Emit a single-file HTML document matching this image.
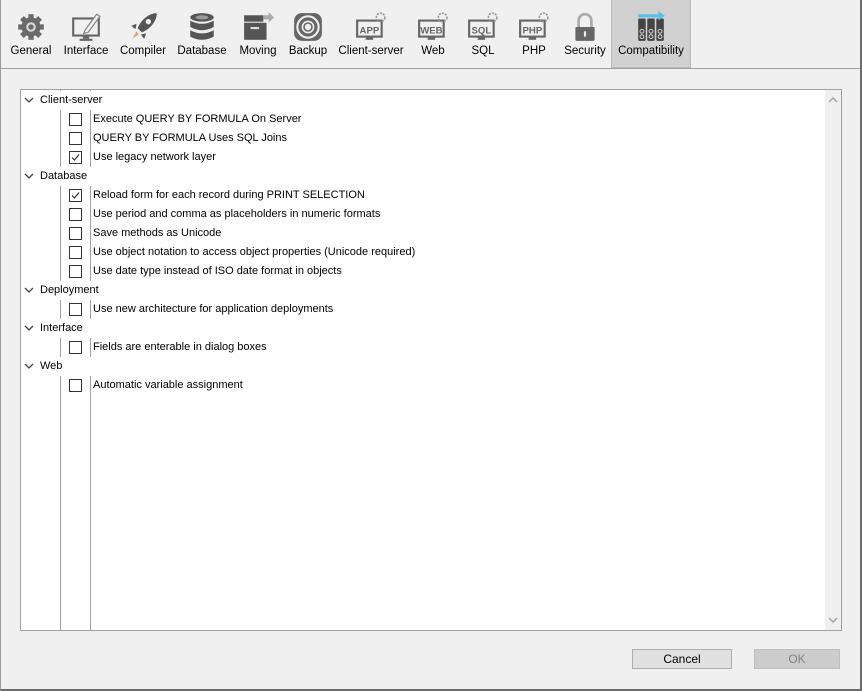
<!DOCTYPE html>
<html><head><style>
*{margin:0;padding:0;box-sizing:border-box}
body{width:862px;height:691px;background:#f0f0f0;font-family:"Liberation Sans",sans-serif;font-size:11px;color:#000;position:relative;overflow:hidden}
.frame{position:absolute;left:0;top:0;width:862px;height:691px;border-right:2px solid #6d6d6d;border-bottom:2px solid #6d6d6d;border-left:1px solid #9a9a9a}
.tb{position:absolute;top:0;left:0;width:860px;height:69px;border-bottom:1px solid #a0a0a0}
.it{position:absolute;top:0;height:68px;text-align:center}
.it .lb{position:absolute;top:44px;left:0;right:0;font-size:11.5px;line-height:14px;padding-top:0;white-space:nowrap}
.it svg{position:absolute;top:11px;left:50%;margin-left:-16px}
.sel{background:#d1d1d1;border:1px solid #b9b9b9;border-top:none}
.panel{position:absolute;left:20px;top:89px;width:822px;height:542px;background:#fff;border:1px solid #a0a0a0}
.vl{position:absolute;top:0;bottom:0;width:1px;background:#a0a0a0}
.sb{position:absolute;right:0;top:0;bottom:0;width:16px;background:#f0f0f0}
.row{position:absolute;height:19px;line-height:19px;white-space:nowrap}
.cb{position:absolute;left:48px;top:3px;width:13px;height:13px;border:1px solid #333;background:#fff}
.g{left:0;width:803px;background:#fff;padding-left:19px}
.btn{position:absolute;top:649px;height:20px;border:1px solid #adadad;background:#e1e1e1;text-align:center;line-height:18px;font-size:12px}
</style></head><body>
<div class="frame"></div>
<div class="tb">
 <div class="it" style="left:6px;width:50px"><svg width="32" height="32" viewBox="0 0 30 30"><g fill="#6a6a6a"><circle cx="15" cy="15" r="9"/><g stroke="#6a6a6a" stroke-width="5"><line x1="15" y1="3" x2="15" y2="27"/><line x1="3" y1="15" x2="27" y2="15"/><line x1="6.5" y1="6.5" x2="23.5" y2="23.5"/><line x1="23.5" y1="6.5" x2="6.5" y2="23.5"/></g></g><circle cx="15" cy="15" r="4.5" fill="#d8d8d8"/><circle cx="15" cy="15" r="2.5" fill="#6a6a6a"/></svg><div class="lb">General</div></div>
 <div class="it" style="left:60px;width:52px"><svg width="32" height="32" viewBox="0 0 30 30"><rect x="3" y="7" width="24" height="16" fill="none" stroke="#666" stroke-width="2"/><rect x="12" y="23" width="6" height="3" fill="#666"/><rect x="9" y="26" width="12" height="2" fill="#666"/><path d="M14 18 L25 3 L28 5 L17 20 L13 21Z" fill="#f0f0f0" stroke="#888" stroke-width="1.2"/></svg><div class="lb">Interface</div></div>
 <div class="it" style="left:116px;width:54px"><svg width="32" height="32" viewBox="0 0 30 30"><path d="M27 2 C19 3 13 9 10 16 L14 20 C21 17 27 11 28 3Z" fill="#555"/><circle cx="20" cy="10" r="2.5" fill="#eee"/><path d="M9 12 L4 14 L8 17Z M18 21 L16 26 L13 22Z" fill="#555"/><path d="M9 19 L5 26 L11 22Z" fill="#e8a080"/></svg><div class="lb">Compiler</div></div>
 <div class="it" style="left:174px;width:56px"><svg width="32" height="32" viewBox="0 0 30 30"><g fill="#555"><ellipse cx="15" cy="6" rx="11" ry="4"/><path d="M4 9 Q15 15 26 9 V15 Q15 21 4 15Z"/><path d="M4 18 Q15 24 26 18 V24 Q15 30 4 24Z"/></g><ellipse cx="15" cy="6" rx="6" ry="2" fill="#999"/></svg><div class="lb">Database</div></div>
 <div class="it" style="left:234px;width:48px"><svg width="32" height="32" viewBox="0 0 30 30"><rect x="2" y="4" width="18" height="6" fill="#555"/><rect x="2" y="11" width="21" height="16" fill="#555"/><rect x="8" y="15" width="8" height="2" fill="#ddd"/><path d="M20 4 H25 V1 L30 6 L25 11 V8 H20Z" fill="#aaa"/></svg><div class="lb">Moving</div></div>
 <div class="it" style="left:285px;width:46px"><svg width="32" height="32" viewBox="0 0 30 30"><rect x="2" y="2" width="26" height="26" rx="7" fill="#666"/><circle cx="15" cy="15" r="11" fill="#eee"/><circle cx="15" cy="15" r="9" fill="#666"/><circle cx="15" cy="15" r="6" fill="#eee"/><circle cx="15" cy="15" r="4.5" fill="#666"/><circle cx="15" cy="15" r="3" fill="#eee"/></svg><div class="lb">Backup</div></div>
 <div class="it" style="left:335px;width:72px"><svg width="32" height="32" viewBox="0 0 30 30"><rect x="2" y="9" width="23" height="15" fill="none" stroke="#666" stroke-width="2"/><rect x="10" y="24" width="7" height="3" fill="#666"/><text x="13.5" y="21" font-size="9" font-weight="bold" fill="#666" text-anchor="middle" font-family="Liberation Sans">APP</text><circle cx="24" cy="6" r="4" fill="none" stroke="#999" stroke-width="1.5" stroke-dasharray="2 1"/></svg><div class="lb">Client-server</div></div>
 <div class="it" style="left:412px;width:42px"><svg width="32" height="32" viewBox="0 0 30 30"><rect x="2" y="9" width="23" height="15" fill="none" stroke="#666" stroke-width="2"/><rect x="10" y="24" width="7" height="3" fill="#666"/><text x="13.5" y="21" font-size="9" font-weight="bold" fill="#666" text-anchor="middle" font-family="Liberation Sans">WEB</text><circle cx="24" cy="6" r="4" fill="none" stroke="#999" stroke-width="1.5" stroke-dasharray="2 1"/></svg><div class="lb">Web</div></div>
 <div class="it" style="left:462px;width:42px"><svg width="32" height="32" viewBox="0 0 30 30"><rect x="2" y="9" width="23" height="15" fill="none" stroke="#666" stroke-width="2"/><rect x="10" y="24" width="7" height="3" fill="#666"/><text x="13.5" y="21" font-size="9" font-weight="bold" fill="#666" text-anchor="middle" font-family="Liberation Sans">SQL</text><circle cx="24" cy="6" r="4" fill="none" stroke="#999" stroke-width="1.5" stroke-dasharray="2 1"/></svg><div class="lb">SQL</div></div>
 <div class="it" style="left:513px;width:42px"><svg width="32" height="32" viewBox="0 0 30 30"><rect x="2" y="9" width="23" height="15" fill="none" stroke="#666" stroke-width="2"/><rect x="10" y="24" width="7" height="3" fill="#666"/><text x="13.5" y="21" font-size="9" font-weight="bold" fill="#666" text-anchor="middle" font-family="Liberation Sans">PHP</text><circle cx="24" cy="6" r="4" fill="none" stroke="#999" stroke-width="1.5" stroke-dasharray="2 1"/></svg><div class="lb">PHP</div></div>
 <div class="it" style="left:561px;width:48px"><svg width="32" height="32" viewBox="0 0 30 30"><path d="M9 15 V9 A6 6 0 0 1 21 9 V15" fill="none" stroke="#aaa" stroke-width="2.5"/><rect x="6" y="15" width="18" height="13" rx="1" fill="#666"/><rect x="14" y="19" width="2" height="5" fill="#eee"/></svg><div class="lb">Security</div></div>
 <div class="it sel" style="left:611px;width:80px"><svg width="32" height="32" viewBox="0 0 30 30"><g fill="#444"><rect x="3" y="7" width="7" height="21" rx="1"/><rect x="11.5" y="7" width="7" height="21" rx="1"/><rect x="20" y="7" width="7" height="21" rx="1"/></g><g fill="none" stroke="#ccc" stroke-width="1"><circle cx="6.5" cy="19" r="1.8"/><circle cx="15" cy="19" r="1.8"/><circle cx="23.5" cy="19" r="1.8"/><circle cx="6.5" cy="24" r="1.8"/><circle cx="15" cy="24" r="1.8"/><circle cx="23.5" cy="24" r="1.8"/></g><path d="M3 3 H22 V0 L28 4.5 L22 9 V6 H3Z" fill="#5bbfee"/></svg><div class="lb">Compatibility</div></div>
</div>
<div class="panel">
 <div class="vl" style="left:39px"></div>
 <div class="vl" style="left:69px"></div>
 <div class="sb"><svg width="16" height="16" style="position:absolute;top:2px;left:0"><path d="M4 10 L8 6 L12 10" fill="none" stroke="#a0a0a0" stroke-width="1.5"/></svg><svg width="16" height="16" style="position:absolute;bottom:2px;left:0"><path d="M4 6 L8 10 L12 6" fill="none" stroke="#a0a0a0" stroke-width="1.5"/></svg></div>
 <div class="row g" style="top:1px">Client-server</div>
 <div class="row" style="top:20px;left:0;width:400px"><div class="cb"></div><span style="position:absolute;left:72px">Execute QUERY BY FORMULA On Server</span></div>
 <div class="row" style="top:39px;left:0;width:400px"><div class="cb"></div><span style="position:absolute;left:72px">QUERY BY FORMULA Uses SQL Joins</span></div>
 <div class="row" style="top:58px;left:0;width:400px"><div class="cb"><svg width="11" height="11" style="position:absolute;left:0;top:0"><path d="M2 5.5 L4.5 8 L9 2.5" fill="none" stroke="#333" stroke-width="1.2"/></svg></div><span style="position:absolute;left:72px">Use legacy network layer</span></div>
 <div class="row g" style="top:77px">Database</div>
 <div class="row" style="top:96px;left:0;width:500px"><div class="cb"><svg width="11" height="11" style="position:absolute;left:0;top:0"><path d="M2 5.5 L4.5 8 L9 2.5" fill="none" stroke="#333" stroke-width="1.2"/></svg></div><span style="position:absolute;left:72px">Reload form for each record during PRINT SELECTION</span></div>
 <div class="row" style="top:115px;left:0;width:500px"><div class="cb"></div><span style="position:absolute;left:72px">Use period and comma as placeholders in numeric formats</span></div>
 <div class="row" style="top:134px;left:0;width:500px"><div class="cb"></div><span style="position:absolute;left:72px">Save methods as Unicode</span></div>
 <div class="row" style="top:153px;left:0;width:500px"><div class="cb"></div><span style="position:absolute;left:72px">Use object notation to access object properties (Unicode required)</span></div>
 <div class="row" style="top:172px;left:0;width:500px"><div class="cb"></div><span style="position:absolute;left:72px">Use date type instead of ISO date format in objects</span></div>
 <div class="row g" style="top:191px">Deployment</div>
 <div class="row" style="top:210px;left:0;width:500px"><div class="cb"></div><span style="position:absolute;left:72px">Use new architecture for application deployments</span></div>
 <div class="row g" style="top:229px">Interface</div>
 <div class="row" style="top:248px;left:0;width:500px"><div class="cb"></div><span style="position:absolute;left:72px">Fields are enterable in dialog boxes</span></div>
 <div class="row g" style="top:267px">Web</div>
 <div class="row" style="top:286px;left:0;width:500px"><div class="cb"></div><span style="position:absolute;left:72px">Automatic variable assignment</span></div>
 <svg width="14" height="300" style="position:absolute;left:1px;top:0">
  <g fill="none" stroke="#444" stroke-width="1.3"><path d="M3 8 L7 12 L11 8"/><path d="M3 84 L7 88 L11 84"/><path d="M3 198 L7 202 L11 198"/><path d="M3 236 L7 240 L11 236"/><path d="M3 274 L7 278 L11 274"/></g></svg>
</div>
<div class="btn" style="left:632px;width:100px">Cancel</div>
<div class="btn" style="left:754px;width:86px;background:#cccccc;border-color:#bfbfbf;color:#838383">OK</div>
</body></html>
